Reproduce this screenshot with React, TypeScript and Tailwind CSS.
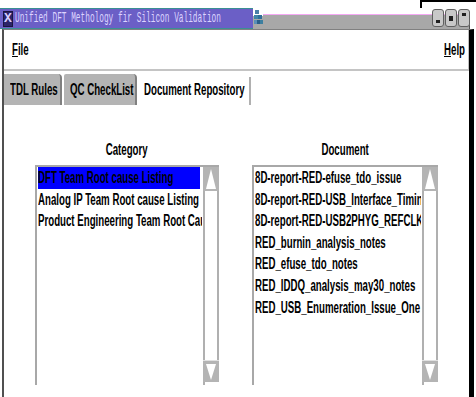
import React from "react";

const categories = [
  "DFT Team Root cause Listing",
  "Analog IP Team Root cause Listing",
  "Product Engineering Team Root Cause Listing",
];

const documents = [
  "8D-report-RED-efuse_tdo_issue",
  "8D-report-RED-USB_Interface_Timing",
  "8D-report-RED-USB2PHYG_REFCLK",
  "RED_burnin_analysis_notes",
  "RED_efuse_tdo_notes",
  "RED_IDDQ_analysis_may30_notes",
  "RED_USB_Enumeration_Issue_One",
];

// condensed X11-ish text
function Cond({ children, center }: { children: React.ReactNode; center?: boolean }) {
  return (
    <span
      className={`inline-block whitespace-nowrap font-bold text-[16px] scale-x-[0.605] ${
        center ? "origin-center" : "origin-left"
      }`}
    >
      {children}
    </span>
  );
}

function ScrollBar() {
  return (
    <div className="w-[16px] flex flex-col shrink-0">
      <svg width="16" height="24" viewBox="0 0 16 24" className="block">
        <rect x="0" y="0" width="16" height="24" fill="#b4b4b4" />
        <polygon points="8,2 13,22 3,22" fill="#ffffff" />
      </svg>
      <div className="flex-1 border-l-2 border-r-2 border-[#b0b0b0] bg-white" />
      <svg width="16" height="22" viewBox="0 0 16 22" className="block">
        <rect x="0" y="0" width="16" height="22" fill="#b4b4b4" />
        <rect x="0" y="0" width="16" height="1" fill="#e0e0e0" />
        <polygon points="3,4 13,4 8,20" fill="#ffffff" />
      </svg>
      <div className="h-[3px] border-l-2 border-[#b0b0b0]" />
    </div>
  );
}

function ListPanel({
  label,
  items,
  selected,
  width,
}: {
  label: string;
  items: string[];
  selected?: number;
  width: string;
}) {
  return (
    <div className={`flex flex-col ${width}`}>
      <div className="h-[20px] leading-[20px] text-center">
        <Cond center>{label}</Cond>
      </div>
      <div className="mt-[5px] h-[220px] flex border-l-2 border-t-2 border-[#a8a8a8]">
        <div className="flex-1 overflow-hidden pl-[1px] pr-[1px]">
          {items.map((it, i) => (
            <div
              key={it}
              className={`h-[21.6px] leading-[21px] overflow-hidden ${
                i === selected ? "bg-[#0000ff] mr-[2px]" : ""
              }`}
            >
              <Cond>{it}</Cond>
            </div>
          ))}
        </div>
        <ScrollBar />
      </div>
    </div>
  );
}

export default function App() {
  return (
    <div className="w-[476px] h-[397px] bg-white flex flex-col overflow-hidden relative text-black font-['Liberation_Sans',Arial,sans-serif]">
      {/* leftovers of the window behind */}
      <div className="h-[8px] flex shrink-0">
        <div className="flex-1" />
        <div className="w-[56px] border-t-2 border-l-2 border-black" />
      </div>

      {/* Title bar */}
      <div className="h-[21px] flex shrink-0 relative">
        <div className="w-[253px] bg-[#6b5fc6] border-y border-[#3a8f94] flex items-center overflow-hidden">
          <div className="ml-[3px] w-[12px] h-[16px] bg-[#2c2468] border border-[#1a1540] flex items-center justify-center">
            <span className="text-[13px] font-bold leading-none text-[#d8d0ff] font-['Liberation_Mono',monospace]">
              X
            </span>
          </div>
          <span className="ml-[2px] inline-block whitespace-nowrap origin-left scale-x-[0.52] text-[15px] leading-none text-[#dcd4ff] font-['Liberation_Mono',monospace]">
            Unified DFT Methology fir Silicon Validation
          </span>
        </div>
        <svg width="10" height="21" viewBox="0 0 10 21" className="block shrink-0">
          <rect x="0" y="0" width="10" height="21" fill="#ffffff" />
          <rect x="0" y="8" width="10" height="13" fill="#a8a8a8" />
          <rect x="2" y="2" width="4" height="4" fill="#4a7fa8" />
          <rect x="1" y="7" width="4" height="4" fill="#3f86a8" />
          <rect x="5" y="7" width="4" height="4" fill="#2f6f9a" />
          <rect x="1" y="12" width="3" height="4" fill="#5a8fb8" />
          <rect x="4" y="12" width="3" height="4" fill="#2a5f88" />
          <rect x="7" y="12" width="3" height="4" fill="#3c7fa0" />
        </svg>
        <div className="flex-1 flex flex-col">
          <div className="h-[6px] bg-white" />
          <div className="h-[1px] bg-[#f4a8f4]" />
          <div className="flex-1 bg-[#a8a8a8] border-r border-[#505050]" />
        </div>
        <div className="w-[6px] bg-white" />
        <div className="absolute right-[6px] top-[1px] flex gap-[1px]">
          {["min", "max", "close"].map((k) => (
            <div
              key={k}
              className="w-[12px] h-[18px] rounded-[3px] bg-[#c8c8c8] border border-[#606060] flex justify-center"
            >
              <div
                className={`bg-[#202020] ${
                  k === "min"
                    ? "w-[4px] h-[3px] mt-[10px]"
                    : k === "max"
                    ? "w-[4px] h-[5px] mt-[6px]"
                    : "w-[4px] h-[3px] mt-[3px]"
                }`}
              />
            </div>
          ))}
        </div>
      </div>

      {/* Window body */}
      <div className="flex-1 flex ml-[2px] mr-[2px] border-l-2 border-[#505050] border-r-[5px] border-r-black border-t border-t-[#808080]">
        <div className="flex-1 flex flex-col">
          {/* Menu bar */}
          <div className="h-[41px] shrink-0 border-b-2 border-[#c4c4c4] border-r border-r-[#c0c0c0] flex items-center justify-between pl-[8px] pr-[4px]">
            <Cond>
              <span className="underline">F</span>ile
            </Cond>
            <span className="w-[20px]">
              <Cond>
                <span className="underline">H</span>elp
              </Cond>
            </span>
          </div>

          {/* Tabs */}
          <div className="mt-[3px] h-[31px] flex shrink-0">
            <div className="w-[58px] bg-[#b4b4b4] rounded-tr-[4px] border-r-2 border-[#808080] flex items-center pl-[6px]">
              <Cond>TDL Rules</Cond>
            </div>
            <div className="ml-[2px] w-[73px] bg-[#b4b4b4] rounded-tr-[4px] rounded-tl-[2px] border-r-2 border-[#808080] flex items-center pl-[6px]">
              <Cond>QC CheckList</Cond>
            </div>
            <div className="w-[112px] flex items-center pl-[7px]">
              <Cond>Document Repository</Cond>
            </div>
            <div className="w-[2px] mt-[3px] bg-[#b0b0b0]" />
          </div>

          {/* Content */}
          <div className="flex pl-[31px] pt-[35px] gap-[33px]">
            <ListPanel label="Category" items={categories} selected={0} width="w-[184px]" />
            <ListPanel label="Document" items={documents} width="w-[186px]" />
          </div>
        </div>
      </div>
    </div>
  );
}
